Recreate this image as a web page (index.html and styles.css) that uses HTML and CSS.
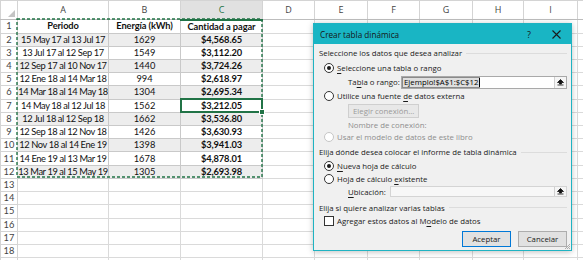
FILE: index.html
```html
<!DOCTYPE html>
<html lang="es">
<head>
    <meta charset="UTF-8">
    <title>Crear tabla dinámica</title>
    <link rel="stylesheet" href="styles.css">
</head>
<body>
    <div class="workspace">
        <!-- Sheet grid -->
        <table class="sheet">
            <colgroup>
                <col class="c-num"><col class="c-a"><col class="c-b"><col class="c-c">
                <col class="c-d"><col class="c-e"><col class="c-f"><col class="c-g">
                <col class="c-h"><col class="c-i"><col class="c-j">
            </colgroup>
            <tr class="head">
                <th class="corner"><span class="tri"></span></th>
                <th>A</th><th>B</th><th class="active">C</th><th>D</th><th>E</th><th>F</th><th>G</th><th>H</th><th>I</th><th></th>
            </tr>
            <tr>
                <th>1</th><td class="b">Periodo</td><td class="b">Energía (kWh)</td><td class="b">Cantidad a pagar</td>
                <td></td><td></td><td></td><td></td><td></td><td></td><td></td>
            </tr>
            <tr class="band">
                <th>2</th><td>15 May 17 al 13 Jul 17</td><td>1629</td><td class="b">$4,568.65</td>
                <td></td><td></td><td></td><td></td><td></td><td></td><td></td>
            </tr>
            <tr>
                <th>3</th><td>13 Jul 17 al 12 Sep 17</td><td>1549</td><td class="b">$3,112.20</td>
                <td></td><td></td><td></td><td></td><td></td><td></td><td></td>
            </tr>
            <tr class="band">
                <th>4</th><td>12 Sep 17 al 10 Nov 17</td><td>1440</td><td class="b">$3,724.26</td>
                <td></td><td></td><td></td><td></td><td></td><td></td><td></td>
            </tr>
            <tr>
                <th>5</th><td>12 Ene 18 al 14 Mar 18</td><td>994</td><td class="b">$2,618.97</td>
                <td></td><td></td><td></td><td></td><td></td><td></td><td></td>
            </tr>
            <tr class="band">
                <th>6</th><td>14 Mar 18 al 14 May 18</td><td>1304</td><td class="b">$2,695.34</td>
                <td></td><td></td><td></td><td></td><td></td><td></td><td></td>
            </tr>
            <tr>
                <th>7</th><td>14 May 18 al 12 Jul 18</td><td>1562</td><td class="b">$3,212.05</td>
                <td></td><td></td><td></td><td></td><td></td><td></td><td></td>
            </tr>
            <tr class="band">
                <th>8</th><td>12 Jul 18 al 12 Sep 18</td><td>1662</td><td class="b">$3,536.80</td>
                <td></td><td></td><td></td><td></td><td></td><td></td><td></td>
            </tr>
            <tr>
                <th>9</th><td>12 Sep 18 al 12 Nov 18</td><td>1426</td><td class="b">$3,630.93</td>
                <td></td><td></td><td></td><td></td><td></td><td></td><td></td>
            </tr>
            <tr class="band">
                <th>10</th><td>12 Nov 18 al 14 Ene 19</td><td>1398</td><td class="b">$3,941.03</td>
                <td></td><td></td><td></td><td></td><td></td><td></td><td></td>
            </tr>
            <tr>
                <th>11</th><td>14 Ene 19 al 13 Mar 19</td><td>1678</td><td class="b">$4,878.01</td>
                <td></td><td></td><td></td><td></td><td></td><td></td><td></td>
            </tr>
            <tr class="band">
                <th>12</th><td>13 Mar 19 al 15 May 19</td><td>1305</td><td class="b">$2,693.98</td>
                <td></td><td></td><td></td><td></td><td></td><td></td><td></td>
            </tr>
            <tr class="empty"><th>13</th><td></td><td></td><td></td><td></td><td></td><td></td><td></td><td></td><td></td><td></td></tr>
            <tr class="empty"><th>14</th><td></td><td></td><td></td><td></td><td></td><td></td><td></td><td></td><td></td><td></td></tr>
            <tr class="empty"><th>15</th><td></td><td></td><td></td><td></td><td></td><td></td><td></td><td></td><td></td><td></td></tr>
            <tr class="empty"><th>16</th><td></td><td></td><td></td><td></td><td></td><td></td><td></td><td></td><td></td><td></td></tr>
            <tr class="empty"><th>17</th><td></td><td></td><td></td><td></td><td></td><td></td><td></td><td></td><td></td><td></td></tr>
            <tr class="empty"><th>18</th><td></td><td></td><td></td><td></td><td></td><td></td><td></td><td></td><td></td><td></td></tr>
            <tr class="empty"><th></th><td></td><td></td><td></td><td></td><td></td><td></td><td></td><td></td><td></td><td></td></tr>
        </table>

        <!-- Copy marquee around A1:C12 -->
        <svg class="marquee" width="247" height="160" viewBox="0 0 247 160">
            <rect x="1" y="1" width="245" height="158" fill="none" stroke="#217346" stroke-width="1.4" stroke-dasharray="3 2"/>
        </svg>

        <!-- Active cell C7 -->
        <div class="active-cell"><span class="handle"></span></div>

        <!-- Dialog -->
        <div class="dialog">
            <div class="dlg-title">
                <span class="dlg-name">Crear tabla dinámica</span>
                <span class="dlg-help">?</span>
                <svg class="dlg-close" width="9" height="9" viewBox="0 0 9 9">
                    <path d="M0.5 0.5 L8.5 8.5 M8.5 0.5 L0.5 8.5" stroke="#1b1b1b" stroke-width="1.1"/>
                </svg>
            </div>
            <div class="dlg-body">
                <div class="group"><span>Seleccione los datos que desea analizar</span></div>
                <div class="opt r1"><span class="radio on"></span><span><u>S</u>eleccione una tabla o rango</span></div>
                <div class="field f-range">
                    <span class="field-label">Ta<u>b</u>la o rango:</span>
                    <div class="input">
                        <span class="selected-text">Ejemplo!$A$1:$C$12</span><span class="caret"></span>
                        <span class="pick">
                            <svg width="7" height="7" viewBox="0 0 7 7"><path d="M3.5 0.5 L6.5 3.5 H4.5 V5 H2.5 V3.5 H0.5 Z M0.5 6 H6.5" fill="#111" stroke="#111" stroke-width="0.8"/></svg>
                        </span>
                    </div>
                </div>
                <div class="opt r2"><span class="radio"></span><span>Utilice una fuente <u>d</u>e datos externa</span></div>
                <div class="sub"><span class="btn-disabled">Elegir conexión...</span></div>
                <div class="sub muted conn-name">Nombre de conexión:</div>
                <div class="opt r3 muted"><span class="radio off"></span><span>Usar el modelo de datos de este libro</span></div>

                <div class="group g2"><span>Elija dónde desea colocar el informe de tabla dinámica</span></div>
                <div class="opt r4"><span class="radio on"></span><span><u>N</u>ueva hoja de cálculo</span></div>
                <div class="opt r5"><span class="radio"></span><span>Hoja de cálculo <u>e</u>xistente</span></div>
                <div class="field f-place">
                    <span class="field-label"><u>U</u>bicación:</span>
                    <div class="input blank">
                        <span class="pick">
                            <svg width="7" height="7" viewBox="0 0 7 7"><path d="M3.5 0.5 L6.5 3.5 H4.5 V5 H2.5 V3.5 H0.5 Z M0.5 6 H6.5" fill="#111" stroke="#111" stroke-width="0.8"/></svg>
                        </span>
                    </div>
                </div>

                <div class="group g3"><span>Elija si quiere analizar varias tablas</span></div>
                <div class="opt r6"><span class="check"></span><span>Agregar estos datos al M<u>o</u>delo de datos</span></div>

                <div class="actions">
                    <span class="btn default">Aceptar</span>
                    <span class="btn">Cancelar</span>
                </div>
            </div>
            <svg class="grip" width="6" height="6" viewBox="0 0 6 6">
                <path d="M6 1 L1 6 M6 3 L3 6 M6 5 L5 6" stroke="#9a9a9a" stroke-width="0.8"/>
            </svg>
        </div>
    </div>
</body>
</html>
```

FILE: styles.css
```css
/* Global */
body {
    margin: 0;
    background-color: #ffffff;
    overflow: hidden;
}

.workspace {
    position: relative;
    width: 583px;
    height: 260px;
    overflow: hidden;
}

/* Sheet */
.sheet {
    border-collapse: collapse;
    table-layout: fixed;
    width: 600px;
    font-family: Lato, "Liberation Sans", sans-serif;
    font-size: 9.3px;
    color: #111;
}

.c-num { width: 17px; }
.c-a { width: 91px; }
.c-b { width: 72px; }
.c-c { width: 82px; }
.c-d { width: 52px; }
.c-e { width: 53px; }
.c-f { width: 52px; }
.c-g { width: 53px; }
.c-h { width: 51px; }
.c-i { width: 54px; }
.c-j { width: 23px; }

.sheet tr {
    height: 13.22px;
}

.sheet tr.head {
    height: 19px;
}

.sheet td,
.sheet th {
    border: 1px solid #dadada;
    padding: 0;
    text-align: center;
    white-space: nowrap;
    overflow: hidden;
    line-height: 12px;
}

/* Column A dates are long: tighten them like Calibri would */
.sheet td:nth-child(2) {
    letter-spacing: -0.4px;
}

.sheet td.b {
    letter-spacing: -0.1px;
}

.sheet th {
    background-color: #ffffff;
    color: #444;
    font-weight: normal;
    border-color: #d4d4d4;
}

.sheet tr.head th {
    font-family: "Open Sans", sans-serif;
    font-size: 9px;
    border-bottom-color: #bdbdbd;
}

.sheet tr.head th.active {
    background-color: #e1e1e1;
    color: #217346;
    border-bottom: 2px solid #217346;
}

.sheet th.corner {
    position: relative;
}

.tri {
    position: absolute;
    right: 2px;
    bottom: 2px;
    width: 0;
    height: 0;
    border-left: 7px solid transparent;
    border-bottom: 7px solid #c4c4c4;
}

.sheet td.b {
    font-weight: bold;
}

.sheet tr.band td:nth-child(-n+4) {
    background-color: #ededed;
}

.sheet tr:not(.head):not(.empty) td:nth-child(-n+4) {
    border-color: #c9c9c9;
}

/* Marquee and active cell */
.marquee {
    position: absolute;
    left: 16px;
    top: 18px;
}

.active-cell {
    position: absolute;
    left: 180px;
    top: 98px;
    width: 79px;
    height: 11px;
    border: 2px solid #217346;
}

.handle {
    position: absolute;
    right: -4px;
    bottom: -4px;
    width: 4px;
    height: 4px;
    background-color: #217346;
    border: 1px solid #fff;
}

/* Dialog */
.dialog {
    position: absolute;
    left: 313px;
    top: 23px;
    width: 257px;
    height: 226px;
    background-color: #f0f0f0;
    border: 1px solid #1fb3c2;
    box-shadow: 0 1px 6px rgba(0, 0, 0, 0.25);
    font-family: "Open Sans", "Noto Sans", sans-serif;
    font-size: 7.8px;
    color: #1a1a1a;
}

.dlg-title {
    height: 20px;
    background-color: #19b5c4;
    display: flex;
    align-items: center;
    padding-left: 6px;
    padding-right: 10px;
}

.dlg-name {
    flex: 1;
    font-size: 8.2px;
    color: #161616;
}

.dlg-help {
    font-size: 9px;
    margin-right: 21px;
    color: #161616;
}

.dlg-body {
    padding: 2px 4px 0 5px;
}

u {
    text-decoration-thickness: 0.7px;
    text-underline-offset: 1.5px;
}

/* Group headings with trailing rule */
.group {
    height: 14px;
    display: flex;
    align-items: center;
    gap: 4px;
}

.group::after {
    content: "";
    flex: 1;
    height: 1px;
    background-color: #dcdcdc;
}

.group.g2 {
    margin-top: 3px;
}

.group.g3 {
    margin-top: 3px;
    height: 13px;
}

/* Radio / checkbox rows */
.opt {
    height: 14px;
    display: flex;
    align-items: center;
    gap: 3px;
    padding-left: 5px;
}

.opt.r1 { height: 15px; }
.opt.r3 { height: 11px; }
.opt.r4 { height: 13px; }
.opt.r5 { height: 13px; }
.opt.r6 { height: 13px; }

.radio {
    width: 8px;
    height: 8px;
    border: 1px solid #333;
    border-radius: 50%;
    background-color: #fff;
    position: relative;
    flex-shrink: 0;
}

.radio.on::after {
    content: "";
    position: absolute;
    left: 2px;
    top: 2px;
    width: 4px;
    height: 4px;
    border-radius: 50%;
    background-color: #1a1a1a;
}

.radio.off {
    border-color: #c6c6c6;
}

.check {
    width: 8px;
    height: 8px;
    border: 1px solid #333;
    background-color: #fff;
    flex-shrink: 0;
}

.muted {
    color: #8d8d8d;
}

/* Fields */
.field {
    display: flex;
    align-items: center;
}

.f-range {
    height: 14px;
}

.f-place {
    height: 13px;
}

.field-label {
    width: 53px;
    padding-left: 29px;
    flex-shrink: 0;
}

.f-place .field-label {
    width: 42px;
}

.input {
    flex: 1;
    height: 11px;
    background-color: #fff;
    border: 1px solid #a9a9a9;
    display: flex;
    align-items: center;
    position: relative;
}

.input.blank {
    height: 9px;
    background-color: #f7f7f7;
    border-color: #d4d4d4;
}

.selected-text {
    margin-left: 1px;
    padding: 0 1px;
    background-color: #dedede;
    outline: 1px solid #8a8a8a;
    line-height: 9px;
    color: #000;
}

.caret {
    width: 1px;
    height: 9px;
    background-color: #000;
}

.pick {
    position: absolute;
    right: 0;
    top: 0;
    bottom: 0;
    width: 11px;
    border-left: 1px solid #d0d0d0;
    background-color: #f5f5f5;
    display: flex;
    align-items: center;
    justify-content: center;
}

.sub {
    padding-left: 29px;
}

.sub:first-of-type {
    height: 15px;
}

.btn-disabled {
    display: inline-block;
    height: 12px;
    line-height: 12px;
    padding: 0 4px;
    border: 1px solid #cfcfcf;
    background-color: #e8e8e8;
    color: #9a9a9a;
    margin-top: 1px;
}

.conn-name {
    height: 11px;
    margin-top: 2px;
    line-height: 11px;
}

/* Buttons */
.actions {
    display: flex;
    justify-content: flex-end;
    gap: 7px;
    margin-top: 4px;
}

.btn {
    width: 47px;
    height: 14px;
    line-height: 14px;
    text-align: center;
    background-color: #e1e1e1;
    border: 1px solid #adadad;
}

.btn.default {
    border-color: #0078d7;
}

.grip {
    position: absolute;
    right: 1px;
    bottom: 1px;
}
```
